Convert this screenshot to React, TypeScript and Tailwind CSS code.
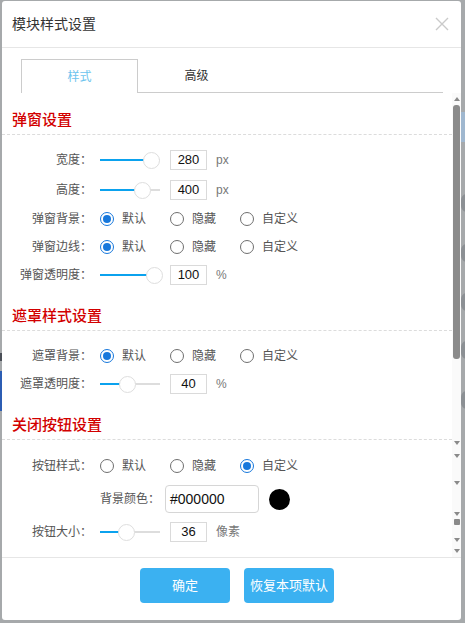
import type { ReactNode } from "react";

const choices = ["默认", "隐藏", "自定义"];

function Label({ children }: { children: ReactNode }) {
  return (
    <div className="w-[90px] shrink-0 text-right text-[12px] leading-[16px] text-[#555]">{children}</div>
  );
}

// pos = thumb centre, px from the left end of the 60px track
function Slider({ pos }: { pos: number }) {
  return (
    <div className="relative ml-[8px] h-[16px] w-[60px] shrink-0">
      <div className="absolute left-0 right-0 top-[7px] h-[2px] bg-[#dddddd]" />
      <div className="absolute left-0 top-[7px] h-[2px] bg-[#0ba2ee]" style={{ width: pos }} />
      <div
        className="absolute top-0 h-[17px] w-[17px] rounded-full border border-[#dedede] bg-white"
        style={{ left: pos - 8 }}
      />
    </div>
  );
}

function NumBox({ value, unit }: { value: string; unit: string }) {
  return (
    <>
      <div className="ml-[10px] flex h-[20px] w-[37px] items-center justify-center border border-[#dadada] text-[13px] text-[#111]">
        {value}
      </div>
      <span className="ml-[9px] text-[12px] text-[#777]">{unit}</span>
    </>
  );
}

function Radios({ checked }: { checked: number }) {
  return (
    <div className="ml-[8px] flex">
      {choices.map((c, i) => (
        <div key={c} className="flex w-[70px] items-center gap-[8px]">
          {i === checked ? (
            <span className="flex h-[14px] w-[14px] items-center justify-center rounded-full border-[1.5px] border-[#1778dc]">
              <span className="h-[8px] w-[8px] rounded-full bg-[#1778dc]" />
            </span>
          ) : (
            <span className="h-[14px] w-[14px] rounded-full border border-[#6f6f6f]" />
          )}
          <span className="text-[12px] text-[#555]">{c}</span>
        </div>
      ))}
    </div>
  );
}

function Head({ children }: { children: ReactNode }) {
  return (
    <div className="border-b border-dashed border-[#dcdcdc] px-[10px] pb-[5px] pt-[18px] text-[15px] font-medium leading-[18px] text-[#d20000]">
      {children}
    </div>
  );
}

function Arrow({ top, up }: { top: number; up?: boolean }) {
  return (
    <span
      className={
        up
          ? "absolute left-[2px] h-0 w-0 border-x-[3px] border-b-[4px] border-x-transparent border-b-[#8a8a8a]"
          : "absolute left-[2px] h-0 w-0 border-x-[3px] border-t-[4px] border-x-transparent border-t-[#8a8a8a]"
      }
      style={{ top }}
    />
  );
}

export default function App() {
  return (
    <div className="relative h-[623px] w-[465px] overflow-hidden bg-[#a6a9ab] font-['Liberation_Sans','Noto_Sans_CJK_SC',sans-serif]">
      {/* bits of the page behind the overlay */}
      <div className="absolute left-0 top-[353px] h-[8px] w-[2px] bg-[#4a4f57]" />
      <div className="absolute left-0 top-[371px] h-[40px] w-[2px] bg-[#2c5db3]" />
      <div className="absolute right-0 top-[112px] h-[30px] w-[4px] bg-[#9fb7cf]" />
      {[203, 253, 302, 350, 400].map((y) => (
        <div key={y} className="absolute right-[-8px] h-[18px] w-[12px] rounded-full bg-[#8c9094]" style={{ top: y - 9 }} />
      ))}

      <div className="relative ml-[2px] mt-[1px] flex h-[619px] w-[459px] flex-col overflow-hidden rounded-[3px] bg-white">
        <div className="flex h-[47px] shrink-0 items-center justify-between border-b border-[#e6e6e6] pl-[10px] pr-[12px]">
          <span className="text-[14px] text-[#333]">模块样式设置</span>
          <svg width="14" height="14" viewBox="0 0 14 14">
            <path d="M1 1L13 13M13 1L1 13" stroke="#cacaca" strokeWidth="1.4" fill="none" />
          </svg>
        </div>

        <div className="flex h-[45px] shrink-0 items-end pl-[19px] pr-[18px]">
          <div className="flex h-[34px] w-[117px] items-center justify-center border border-b-0 border-[#cccccc] text-[12px] text-[#6cc4ee]">
            样式
          </div>
          <div className="flex h-[34px] w-[117px] items-center justify-center border-b border-[#cccccc] text-[12px] text-[#333]">
            高级
          </div>
          <div className="h-[34px] flex-1 border-b border-[#cccccc]" />
        </div>

        <div className="flex h-[464px] shrink-0 overflow-hidden">
          <div className="flex-1">
            <Head>弹窗设置</Head>
            <div className="pt-[10px]">
              <div className="flex h-[30px] items-center">
                <Label>宽度：</Label>
                <Slider pos={51} />
                <NumBox value="280" unit="px" />
              </div>
              <div className="flex h-[30px] items-center">
                <Label>高度：</Label>
                <Slider pos={42} />
                <NumBox value="400" unit="px" />
              </div>
              <div className="flex h-[28px] items-center">
                <Label>弹窗背景：</Label>
                <Radios checked={0} />
              </div>
              <div className="flex h-[28px] items-center">
                <Label>弹窗边线：</Label>
                <Radios checked={0} />
              </div>
              <div className="flex h-[28px] items-center">
                <Label>弹窗透明度：</Label>
                <Slider pos={54} />
                <NumBox value="100" unit="%" />
              </div>
            </div>

            <Head>遮罩样式设置</Head>
            <div className="pt-[11px]">
              <div className="flex h-[28px] items-center">
                <Label>遮罩背景：</Label>
                <Radios checked={0} />
              </div>
              <div className="flex h-[28px] items-center">
                <Label>遮罩透明度：</Label>
                <Slider pos={27} />
                <NumBox value="40" unit="%" />
              </div>
            </div>

            <Head>关闭按钮设置</Head>
            <div className="pt-[12px]">
              <div className="flex h-[28px] items-center">
                <Label>按钮样式：</Label>
                <Radios checked={2} />
              </div>
              <div className="flex h-[38px] items-center pl-[98px]">
                <span className="text-[12px] text-[#555]">背景颜色：</span>
                <div className="ml-[5px] flex h-[28px] w-[94px] items-center rounded-[4px] border border-[#d6d6d6] pl-[4px] text-[14px] text-[#111]">
                  #000000
                </div>
                <span className="ml-[10px] h-[21px] w-[21px] rounded-full bg-black" />
              </div>
              <div className="flex h-[28px] items-center">
                <Label>按钮大小：</Label>
                <Slider pos={26} />
                <NumBox value="36" unit="像素" />
              </div>
            </div>
          </div>

          <div className="relative w-[9px] shrink-0 bg-[#fafafa]">
            <Arrow top={4} up />
            <div className="absolute left-[1px] top-[12px] h-[254px] w-[7px] rounded-[3px] bg-[#8b8b8b]" />
            {[348, 361, 388, 419, 445, 456].map((y) => (
              <Arrow key={y} top={y} />
            ))}
            <div className="absolute left-[2px] top-[426px] h-[6px] w-[6px] rounded-[1px] bg-[#8a8a8a]" />
          </div>
        </div>

        <div className="flex flex-1 gap-[14px] border-t border-[#e6e6e6] pl-[138px] pt-[10px]">
          <button className="flex h-[35px] w-[90px] items-center justify-center rounded-[4px] bg-[#3bb1f1] text-[13px] text-white">
            确定
          </button>
          <button className="flex h-[35px] w-[90px] items-center justify-center rounded-[4px] bg-[#3bb1f1] text-[13px] text-white">
            恢复本项默认
          </button>
        </div>
      </div>
    </div>
  );
}
